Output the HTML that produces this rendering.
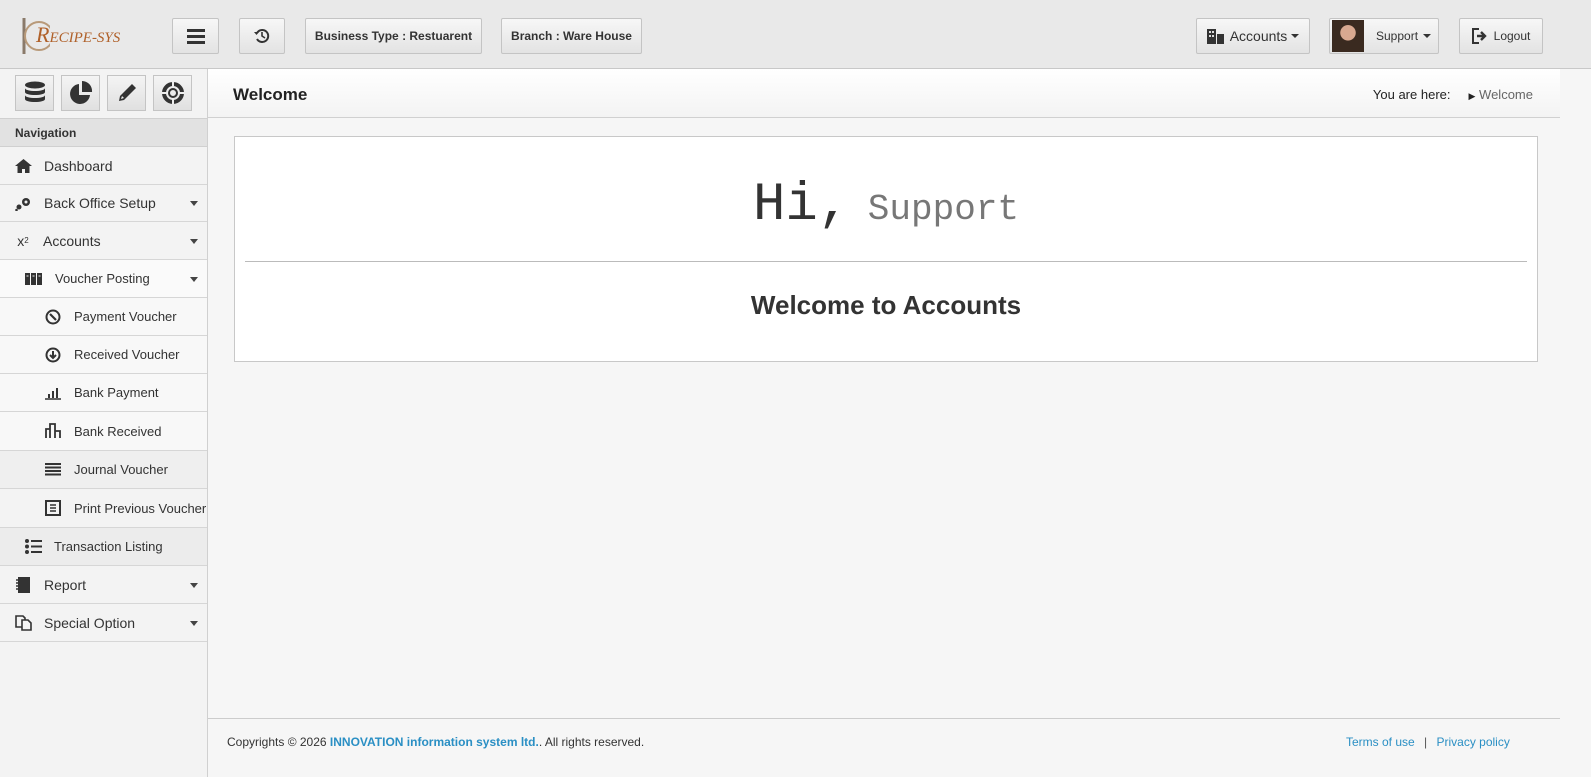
<!DOCTYPE html>
<html><head><meta charset="utf-8"><style>
*{box-sizing:border-box;margin:0;padding:0}
body{width:1591px;height:777px;overflow:hidden;background:#f6f6f6;font-family:"Liberation Sans",sans-serif;color:#333;position:relative}
.hdr{position:absolute;left:0;top:0;width:1591px;height:69px;background:#e9e9e9;border-bottom:1px solid #c8c8c8}
.btn{position:absolute;top:18px;height:36px;background:linear-gradient(#f7f7f7,#e3e3e3);border:1px solid #c4c4c4;border-radius:2px;font-size:12px;font-weight:bold;color:#333;display:flex;align-items:center;justify-content:center}
.side{position:absolute;left:0;top:69px;width:208px;height:708px;background:#f3f3f3;border-right:1px solid #d0d0d0}
.ib{position:absolute;top:6px;width:39px;height:36px;background:linear-gradient(#f4f4f4,#e0e0e0);border:1px solid #c4c4c4;display:flex;align-items:center;justify-content:center}
.nav{position:absolute;left:0;top:49px;width:207px;height:29px;background:#e2e2e2;border-top:1px solid #d0d0d0;border-bottom:1px solid #d0d0d0;font-size:12px;font-weight:bold;padding:7px 15px}
.it{position:absolute;left:0;width:207px;border-bottom:1px solid #d6d6d6;font-size:14px;color:#333;display:flex;align-items:center}
.it .ic{position:absolute;width:18px;height:16px;display:flex;align-items:center;justify-content:center}
.car{position:absolute;right:9px;top:50%;margin-top:-2px;border-left:4px solid transparent;border-right:4px solid transparent;border-top:5px solid #444}
.sub{font-size:13px}
.title{position:absolute;left:208px;top:69px;width:1352px;height:49px;background:linear-gradient(#fff,#f3f3f3);border-bottom:1px solid #d0d0d0}
.box{position:absolute;left:234px;top:136px;width:1304px;height:226px;background:#fff;border:1px solid #c8c8c8}
</style></head><body>
<div class="hdr">
 <div style="position:absolute;left:20px;top:16px;width:24px;height:38px">
  <svg width="30" height="40"><line x1="4" y1="2" x2="4" y2="38" stroke="#8a7a6a" stroke-width="3"/><circle cx="19" cy="20" r="14" fill="none" stroke="#b89a7a" stroke-width="2"/></svg>
 </div>
 <div style="position:absolute;left:36px;top:22px;font-family:'Liberation Serif',serif;font-style:italic;color:#b0612a;font-size:15px"><span style="font-size:22px">R</span>ECIPE-SYS</div>
 <div class="btn" style="left:172px;width:47px"><svg width="18" height="16"><rect y="1" width="18" height="3" fill="#333"/><rect y="7" width="18" height="3" fill="#333"/><rect y="13" width="18" height="3" fill="#333"/></svg></div>
 <div class="btn" style="left:239px;width:46px"><svg width="18" height="18" viewBox="0 0 18 18"><path d="M4 6A6 6 0 1 1 4 12" fill="none" stroke="#333" stroke-width="2"/><path d="M1 5h5l-2.5 3z" fill="#333"/><path d="M9 5v4l3 2" fill="none" stroke="#333" stroke-width="1.6"/></svg></div>
 <div class="btn" style="left:305px;width:177px">Business Type : Restuarent</div>
 <div class="btn" style="left:501px;width:141px">Branch : Ware House</div>
 <div class="btn" style="left:1196px;width:114px;font-weight:normal;font-size:14px"><svg width="17" height="15" style="margin-right:6px"><rect x="0" y="0" width="9" height="15" fill="#333"/><rect x="10" y="5" width="7" height="10" fill="#333"/><rect x="2" y="2" width="2" height="2" fill="#ddd"/><rect x="5" y="2" width="2" height="2" fill="#ddd"/><rect x="2" y="6" width="2" height="2" fill="#ddd"/><rect x="5" y="6" width="2" height="2" fill="#ddd"/></svg>Accounts <span style="display:inline-block;margin-left:4px;border-left:4px solid transparent;border-right:4px solid transparent;border-top:4px solid #333"></span></div>
 <div class="btn" style="left:1329px;width:110px;font-weight:normal;justify-content:flex-start"><div style="width:32px;height:32px;margin-left:2px;background:radial-gradient(circle at 50% 40%,#d8a890 0 30%,#3a2a20 32%);"></div><span style="margin-left:12px">Support</span><span style="display:inline-block;margin-left:5px;border-left:4px solid transparent;border-right:4px solid transparent;border-top:4px solid #333"></span></div>
 <div class="btn" style="left:1459px;width:84px;font-weight:normal"><svg width="16" height="16" style="margin-right:6px"><path d="M7 1H1v14h6" fill="none" stroke="#333" stroke-width="2"/><path d="M5 8h7M9 4l4 4-4 4" fill="none" stroke="#333" stroke-width="2.4"/></svg>Logout</div>
</div>
<div class="side">
 <div class="ib" style="left:15px"><svg width="22" height="24"><ellipse cx="11" cy="4" rx="10" ry="3.5" fill="#333"/><path d="M1 7c0 4 20 4 20 0v4c0 4-20 4-20 0zM1 14c0 4 20 4 20 0v4c0 4-20 4-20 0z" fill="#333"/></svg></div>
 <div class="ib" style="left:61px"><svg width="24" height="24"><path d="M10 3A10 10 0 1 0 21 14H10z" fill="#333"/><path d="M13 0A10 10 0 0 1 23 11H13z" fill="#333"/></svg></div>
 <div class="ib" style="left:107px"><svg width="22" height="22"><path d="M3 19l1-5L16 2l4 4L8 18z" fill="#333"/><path d="M5 17l1-3 2 2z" fill="#eee"/></svg></div>
 <div class="ib" style="left:153px"><svg width="24" height="24"><circle cx="12" cy="12" r="9" fill="none" stroke="#333" stroke-width="4"/><circle cx="12" cy="12" r="4" fill="none" stroke="#333" stroke-width="2"/><path d="M12 1v6M12 17v6M1 12h6M17 12h6" stroke="#eee" stroke-width="2"/></svg></div>
 <div class="nav">Navigation</div>
 <div class="it" style="top:78px;height:38px"><span class="ic" style="left:14px"><svg width="17" height="14"><path d="M8.5 0L0 7h2.5v7h4.5v-4h3v4h4.5V7H17z" fill="#333"/></svg></span><span style="margin-left:44px">Dashboard</span></div>
 <div class="it" style="top:116px;height:37px"><span class="ic" style="left:14px"><svg width="17" height="15"><circle cx="11" cy="6" r="4" fill="#333"/><circle cx="11" cy="6" r="1.5" fill="#eee"/><circle cx="4" cy="11" r="2.5" fill="#333"/><circle cx="1.5" cy="14" r="1.3" fill="#333"/></svg></span><span style="margin-left:44px">Back Office Setup</span><i class="car"></i></div>
 <div class="it" style="top:153px;height:38px"><span class="ic" style="left:14px">x<sup style="font-size:8px">2</sup></span><span style="margin-left:43px">Accounts</span><i class="car"></i></div>
 <div class="it sub" style="top:191px;height:38px;background:#fafafa"><span class="ic" style="left:24px"><svg width="17" height="12"><rect x="0" y="0" width="5" height="12" fill="#333"/><rect x="6" y="0" width="5" height="12" fill="#333"/><rect x="12" y="0" width="5" height="12" fill="#333"/><path d="M1.5 3h2M7.5 3h2M13.5 3h2" stroke="#eee"/></svg></span><span style="margin-left:55px">Voucher Posting</span><i class="car"></i></div>
 <div class="it sub" style="top:229px;height:38px;background:#f8f8f8"><span class="ic" style="left:44px"><svg width="16" height="16"><circle cx="8" cy="8" r="6.5" fill="none" stroke="#333" stroke-width="2"/><path d="M5 5l6 6" stroke="#333" stroke-width="2.2"/></svg></span><span style="margin-left:74px">Payment Voucher</span></div>
 <div class="it sub" style="top:267px;height:38px;background:#f8f8f8"><span class="ic" style="left:44px"><svg width="16" height="16"><circle cx="8" cy="8" r="6.5" fill="none" stroke="#333" stroke-width="2"/><path d="M8 4v6M5 8l3 3 3-3" fill="none" stroke="#333" stroke-width="2"/></svg></span><span style="margin-left:74px">Received Voucher</span></div>
 <div class="it sub" style="top:305px;height:38px;background:#f8f8f8"><span class="ic" style="left:44px"><svg width="16" height="14"><path d="M0 13h16" stroke="#333" stroke-width="1.5"/><rect x="3" y="8" width="2" height="4" fill="#333"/><rect x="7" y="5" width="2" height="7" fill="#333"/><rect x="11" y="2" width="2" height="10" fill="#333"/></svg></span><span style="margin-left:74px">Bank Payment</span></div>
 <div class="it sub" style="top:343px;height:39px;background:#f8f8f8"><span class="ic" style="left:44px"><svg width="16" height="16"><path d="M1 15V6h4v9M5 15V1h5v14M10 15V8h5v7" fill="none" stroke="#333" stroke-width="1.8"/></svg></span><span style="margin-left:74px">Bank Received</span></div>
 <div class="it sub" style="top:382px;height:38px;background:#efefef"><span class="ic" style="left:44px"><svg width="16" height="14"><path d="M0 1h16M0 4.5h16M0 8h16M0 11.5h16" stroke="#333" stroke-width="2"/></svg></span><span style="margin-left:74px">Journal Voucher</span></div>
 <div class="it sub" style="top:420px;height:39px;background:#f3f3f3"><span class="ic" style="left:44px"><svg width="16" height="16"><rect x="1" y="1" width="14" height="14" fill="none" stroke="#333" stroke-width="2"/><path d="M5 5h6M5 8h6M5 11h6" stroke="#333" stroke-width="1.5"/></svg></span><span style="margin-left:74px">Print Previous Voucher</span></div>
 <div class="it sub" style="top:459px;height:38px;background:#ececec"><span class="ic" style="left:24px"><svg width="17" height="15"><circle cx="2" cy="2" r="2" fill="#333"/><circle cx="2" cy="7.5" r="2" fill="#333"/><circle cx="2" cy="13" r="2" fill="#333"/><path d="M6 2h11M6 7.5h11M6 13h11" stroke="#333" stroke-width="2"/></svg></span><span style="margin-left:54px">Transaction Listing</span></div>
 <div class="it" style="top:497px;height:38px"><span class="ic" style="left:14px"><svg width="16" height="16"><rect x="3" y="0" width="12" height="16" fill="#333"/><path d="M1 3h4M1 6h4M1 9h4M1 12h4" stroke="#333" stroke-width="1.5"/></svg></span><span style="margin-left:44px">Report</span><i class="car"></i></div>
 <div class="it" style="top:535px;height:38px"><span class="ic" style="left:14px"><svg width="17" height="16"><path d="M1 1h7l2 2v9H1z" fill="none" stroke="#333" stroke-width="1.6"/><path d="M7 5h6l3 3v7H7z" fill="#f3f3f3" stroke="#333" stroke-width="1.6"/></svg></span><span style="margin-left:44px">Special Option</span><i class="car"></i></div>
</div>
<div class="title">
 <div style="position:absolute;left:25px;top:16px;font-size:17px;font-weight:bold;color:#222">Welcome</div>
 <div style="position:absolute;right:27px;top:18px;font-size:13px;color:#222">You are here:<span style="margin-left:18px;font-size:9px">▶</span> <span style="color:#666">Welcome</span></div>
</div>
<div class="box">
 <div style="position:absolute;left:0;width:100%;top:38px;text-align:center;font-family:'Liberation Mono','DejaVu Sans Mono',monospace;color:#333"><span style="font-size:54px">Hi,</span> <span style="font-size:36px;color:#777;margin-left:8px">Support</span></div>
 <div style="position:absolute;left:10px;right:10px;top:124px;border-top:1px solid #bbb"></div>
 <div style="position:absolute;left:0;width:100%;top:153px;text-align:center;font-size:26px;font-weight:bold;color:#333">Welcome to Accounts</div>
</div>
<div style="position:absolute;left:208px;top:718px;width:1352px;border-top:1px solid #ccc"></div>
<div style="position:absolute;left:227px;top:735px;font-size:12px;color:#333">Copyrights © 2026 <b style="color:#2a8fc4">INNOVATION information system ltd.</b>. All rights reserved.</div>
<div style="position:absolute;left:1346px;top:735px;font-size:12px;color:#2a8fc4">Terms of use <span style="color:#555;margin:0 6px">|</span> Privacy policy</div>
</body></html>
